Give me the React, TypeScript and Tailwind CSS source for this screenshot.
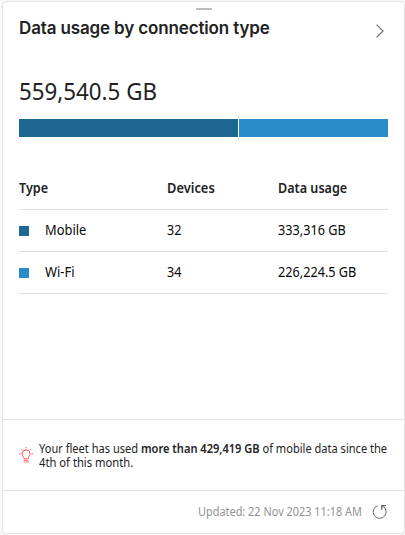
import type { ReactNode } from 'react';

type RowData = { color: string; type: string; devices: string; usage: string };

const rows: RowData[] = [
  { color: 'bg-[#1e6792]', type: 'Mobile', devices: '32', usage: '333,316 GB' },
  { color: 'bg-[#2b8cca]', type: 'Wi-Fi', devices: '34', usage: '226,224.5 GB' },
];

// Narrowed text; the scale is supplied as a complete class name.
function Narrow({ className, children }: { className: string; children: ReactNode }) {
  return <span className={`inline-block origin-left whitespace-nowrap ${className}`}>{children}</span>;
}

function BulbIcon() {
  return (
    <svg width="16" height="18" viewBox="0 0 16 18" fill="none" stroke="#f4505a" strokeWidth="1">
      <path d="M5 12.8c0-2-1.9-2.5-1.9-5a4 4 0 0 1 8 0c0 2.5-1.9 3-1.9 5z" />
      <path d="M4.6 14.5h5M4.6 16h5" strokeWidth="0.8" />
      <path d="M7.1 1v1.3M2 2.8l.9.9M12.2 2.8l-.9.9M0.2 7.8h1.4M12.6 7.8h1.4" />
    </svg>
  );
}

function RefreshIcon() {
  return (
    <svg width="16" height="16" viewBox="0 0 16 16" fill="none" stroke="#666" strokeWidth="1">
      <path d="M5.6 1.7A6.5 6.5 0 1 0 10 1.8" />
      <path d="M9.7 5.8V1.6h4.3" strokeWidth="1.3" />
    </svg>
  );
}

export default function App() {
  return (
    <div className="h-[535px] w-[405px] bg-[#f9f9f9] pt-px pl-[2px] font-['Noto_Sans',sans-serif] text-[#222]">
      <section className="flex h-[533px] w-[403px] flex-col rounded-[4px] border border-[#e2e2e2] bg-white">
        <div className="mt-[6px] ml-[193px] h-[2px] w-4 bg-[#bcbcbc]" />
        <header className="mt-[5px] flex h-[26px] items-center justify-between pr-5 pl-4">
          <h1 className="font-['Inter',sans-serif] text-[17px] leading-[26px] font-semibold tracking-[-0.14px] whitespace-nowrap">
            Data usage by connection type
          </h1>
          <svg className="mt-[5px]" width="8" height="14" viewBox="0 0 8 14" fill="none" stroke="#777" strokeWidth="1.3">
            <path d="M0.6 0.6L7 7L0.6 13.4" />
          </svg>
        </header>
        <div className="mt-[32px] h-[36px] pl-4 text-[24px] leading-[36px]">
          <Narrow className="scale-x-[0.93]">559,540.5 GB</Narrow>
        </div>
        <div className="mx-4 mt-[10px] flex h-[18px] gap-px">
          <div className="w-[219px] bg-[#1e6792]" />
          <div className="flex-1 bg-[#2b8cca]" />
        </div>
        <div className="mx-4 mt-[30px] text-[14px]">
          <div className="grid h-[43px] grid-cols-[148px_111px_1fr] items-center border-b border-[#dddded] pb-[2px] font-semibold">
            <div><Narrow className="scale-x-[0.9]">Type</Narrow></div>
            <div><Narrow className="scale-x-[0.92]">Devices</Narrow></div>
            <div><Narrow className="scale-x-[0.9]">Data usage</Narrow></div>
          </div>
          {rows.map((r) => (
            <div key={r.type} className="grid h-[42px] grid-cols-[148px_111px_1fr] items-center border-b border-[#dddded] pb-[2px] text-[#080808]">
              <div className="flex items-center gap-4">
                <i className={`mt-[3px] size-[10px] ${r.color}`} />
                <Narrow className="scale-x-[0.92]">{r.type}</Narrow>
              </div>
              <div><Narrow className="scale-x-[0.9]">{r.devices}</Narrow></div>
              <div><Narrow className="scale-x-[0.905]">{r.usage}</Narrow></div>
            </div>
          ))}
        </div>
        <div className="mt-[125px] flex h-[72px] border-y border-[#e2e2e2] pl-4">
          <div className="mt-[26px] w-5"><BulbIcon /></div>
          <p className="mt-[22px] w-[350px] text-[12px] leading-[14px]">
            <Narrow className="scale-x-[0.922]">Your fleet has used <b className="font-semibold">more than 429,419 GB</b> of mobile data since the</Narrow>
            <Narrow className="scale-x-[0.935]">4th of this month.</Narrow>
          </p>
        </div>
        <footer className="flex h-[42px] items-center pl-[195px] text-[13px] text-[#929292]">
          <div className="w-[174px]"><Narrow className="scale-x-[0.84]">Updated: 22 Nov 2023 11:18 AM</Narrow></div>
          <RefreshIcon />
        </footer>
      </section>
    </div>
  );
}
